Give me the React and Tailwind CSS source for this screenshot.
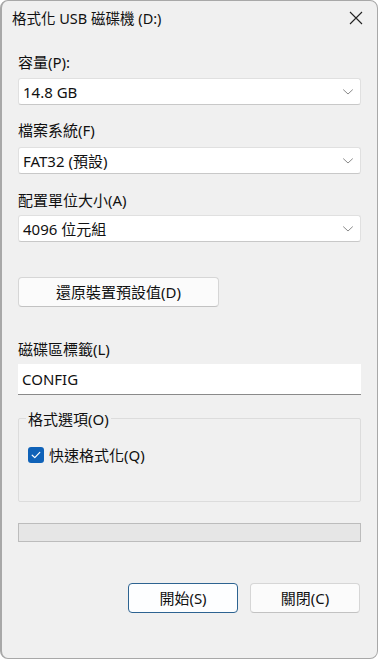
import React from "react";

const Chevron = () => (
    <svg width="10" height="6" viewBox="0 0 10 6" fill="none" className="shrink-0">
        <path d="M0.5 0.8 L5 5 L9.5 0.8" stroke="#8a8a8a" strokeWidth="1" strokeLinecap="round" strokeLinejoin="round"/>
    </svg>
);

const Select = ({value}) => (
    <div className="h-[27px] bg-white border border-[#e0e0e0] border-b-[#c8c8c8] rounded-[3px] flex items-center justify-between pl-[4px] pr-[7px] text-[15px] text-[#111]">
        <span className="leading-[20px]">{value}</span>
        <Chevron/>
    </div>
);

const Label = ({children}) => (
    <div className="h-[20px] leading-[20px] text-[15px] text-[#111]">{children}</div>
);

export default function App() {
    return (
        <div className="w-[378px] h-[659px] bg-white">
            <div
                className="w-full h-full bg-[#f0f0f0] border-l-2 border-t border-r border-b border-[#a8a8a8] rounded-[8px] flex flex-col"
                style={{fontFamily: '"Noto Sans", "Noto Sans CJK TC", sans-serif'}}
            >
                {/* title bar */}
                <div className="h-[33px] flex items-center justify-between pl-[10px] pr-[14px]">
                    <span className="text-[14.5px] text-[#111] leading-[20px]">格式化 USB 磁碟機 (D:)</span>
                    <svg width="14" height="14" viewBox="0 0 14 14" fill="none">
                        <path d="M1 1 L13 13 M13 1 L1 13" stroke="#222" strokeWidth="1.1"/>
                    </svg>
                </div>

                {/* content */}
                <div className="flex flex-col px-[16px]">
                    <div className="mt-[18px]"><Label>容量(P):</Label></div>
                    <div className="mt-[6px]"><Select value="14.8 GB"/></div>

                    <div className="mt-[15px]"><Label>檔案系統(F)</Label></div>
                    <div className="mt-[7px]"><Select value="FAT32 (預設)"/></div>

                    <div className="mt-[16px]"><Label>配置單位大小(A)</Label></div>
                    <div className="mt-[5px]"><Select value="4096 位元組"/></div>

                    <div className="mt-[35px]">
                        <button className="w-[201px] h-[30px] bg-[#fbfbfb] border border-[#d6d6d6] border-b-[#c2c2c2] rounded-[4px] text-[15px] text-[#111] leading-[20px]">
                            還原裝置預設值(D)
                        </button>
                    </div>

                    <div className="mt-[32px]"><Label>磁碟區標籤(L)</Label></div>
                    <div className="mt-[5px] h-[31px] bg-white border-b border-[#8a8a8a] flex items-center pl-[4px] text-[15px] text-[#111] leading-[20px]">
                        CONFIG
                    </div>

                    {/* format options group */}
                    <div className="mt-[23px] relative h-[84px] border border-[#dcdcdc] rounded-[2px] pl-[9px] pt-[26px]">
                        <span className="absolute left-[7px] -top-[10px] px-[2px] bg-[#f0f0f0] text-[15px] text-[#111] leading-[20px]">
                            格式選項(O)
                        </span>
                        <div className="flex items-center gap-[5px]">
                            <div className="w-[16px] h-[16px] rounded-[3px] bg-[#0f62b8] flex items-center justify-center">
                                <svg width="10" height="8" viewBox="0 0 10 8" fill="none">
                                    <path d="M1.2 4.2 L3.8 6.6 L8.8 1.4" stroke="white" strokeWidth="1.2" strokeLinecap="round" strokeLinejoin="round"/>
                                </svg>
                            </div>
                            <span className="text-[15px] text-[#111] leading-[20px]">快速格式化(Q)</span>
                        </div>
                    </div>

                    {/* progress bar */}
                    <div className="mt-[21px] h-[19px] bg-[#e6e6e6] border border-[#bcbcbc]"></div>

                    {/* action buttons */}
                    <div className="mt-[41px] flex justify-end gap-[12px] pr-[1px]">
                        <button className="w-[110px] h-[30px] bg-[#fdfeff] border border-[#2d6391] rounded-[4px] text-[15px] text-[#111] leading-[20px]">
                            開始(S)
                        </button>
                        <button className="w-[110px] h-[30px] bg-[#fbfbfb] border border-[#d6d6d6] border-b-[#c2c2c2] rounded-[4px] text-[15px] text-[#111] leading-[20px]">
                            關閉(C)
                        </button>
                    </div>
                </div>
            </div>
        </div>
    );
}
